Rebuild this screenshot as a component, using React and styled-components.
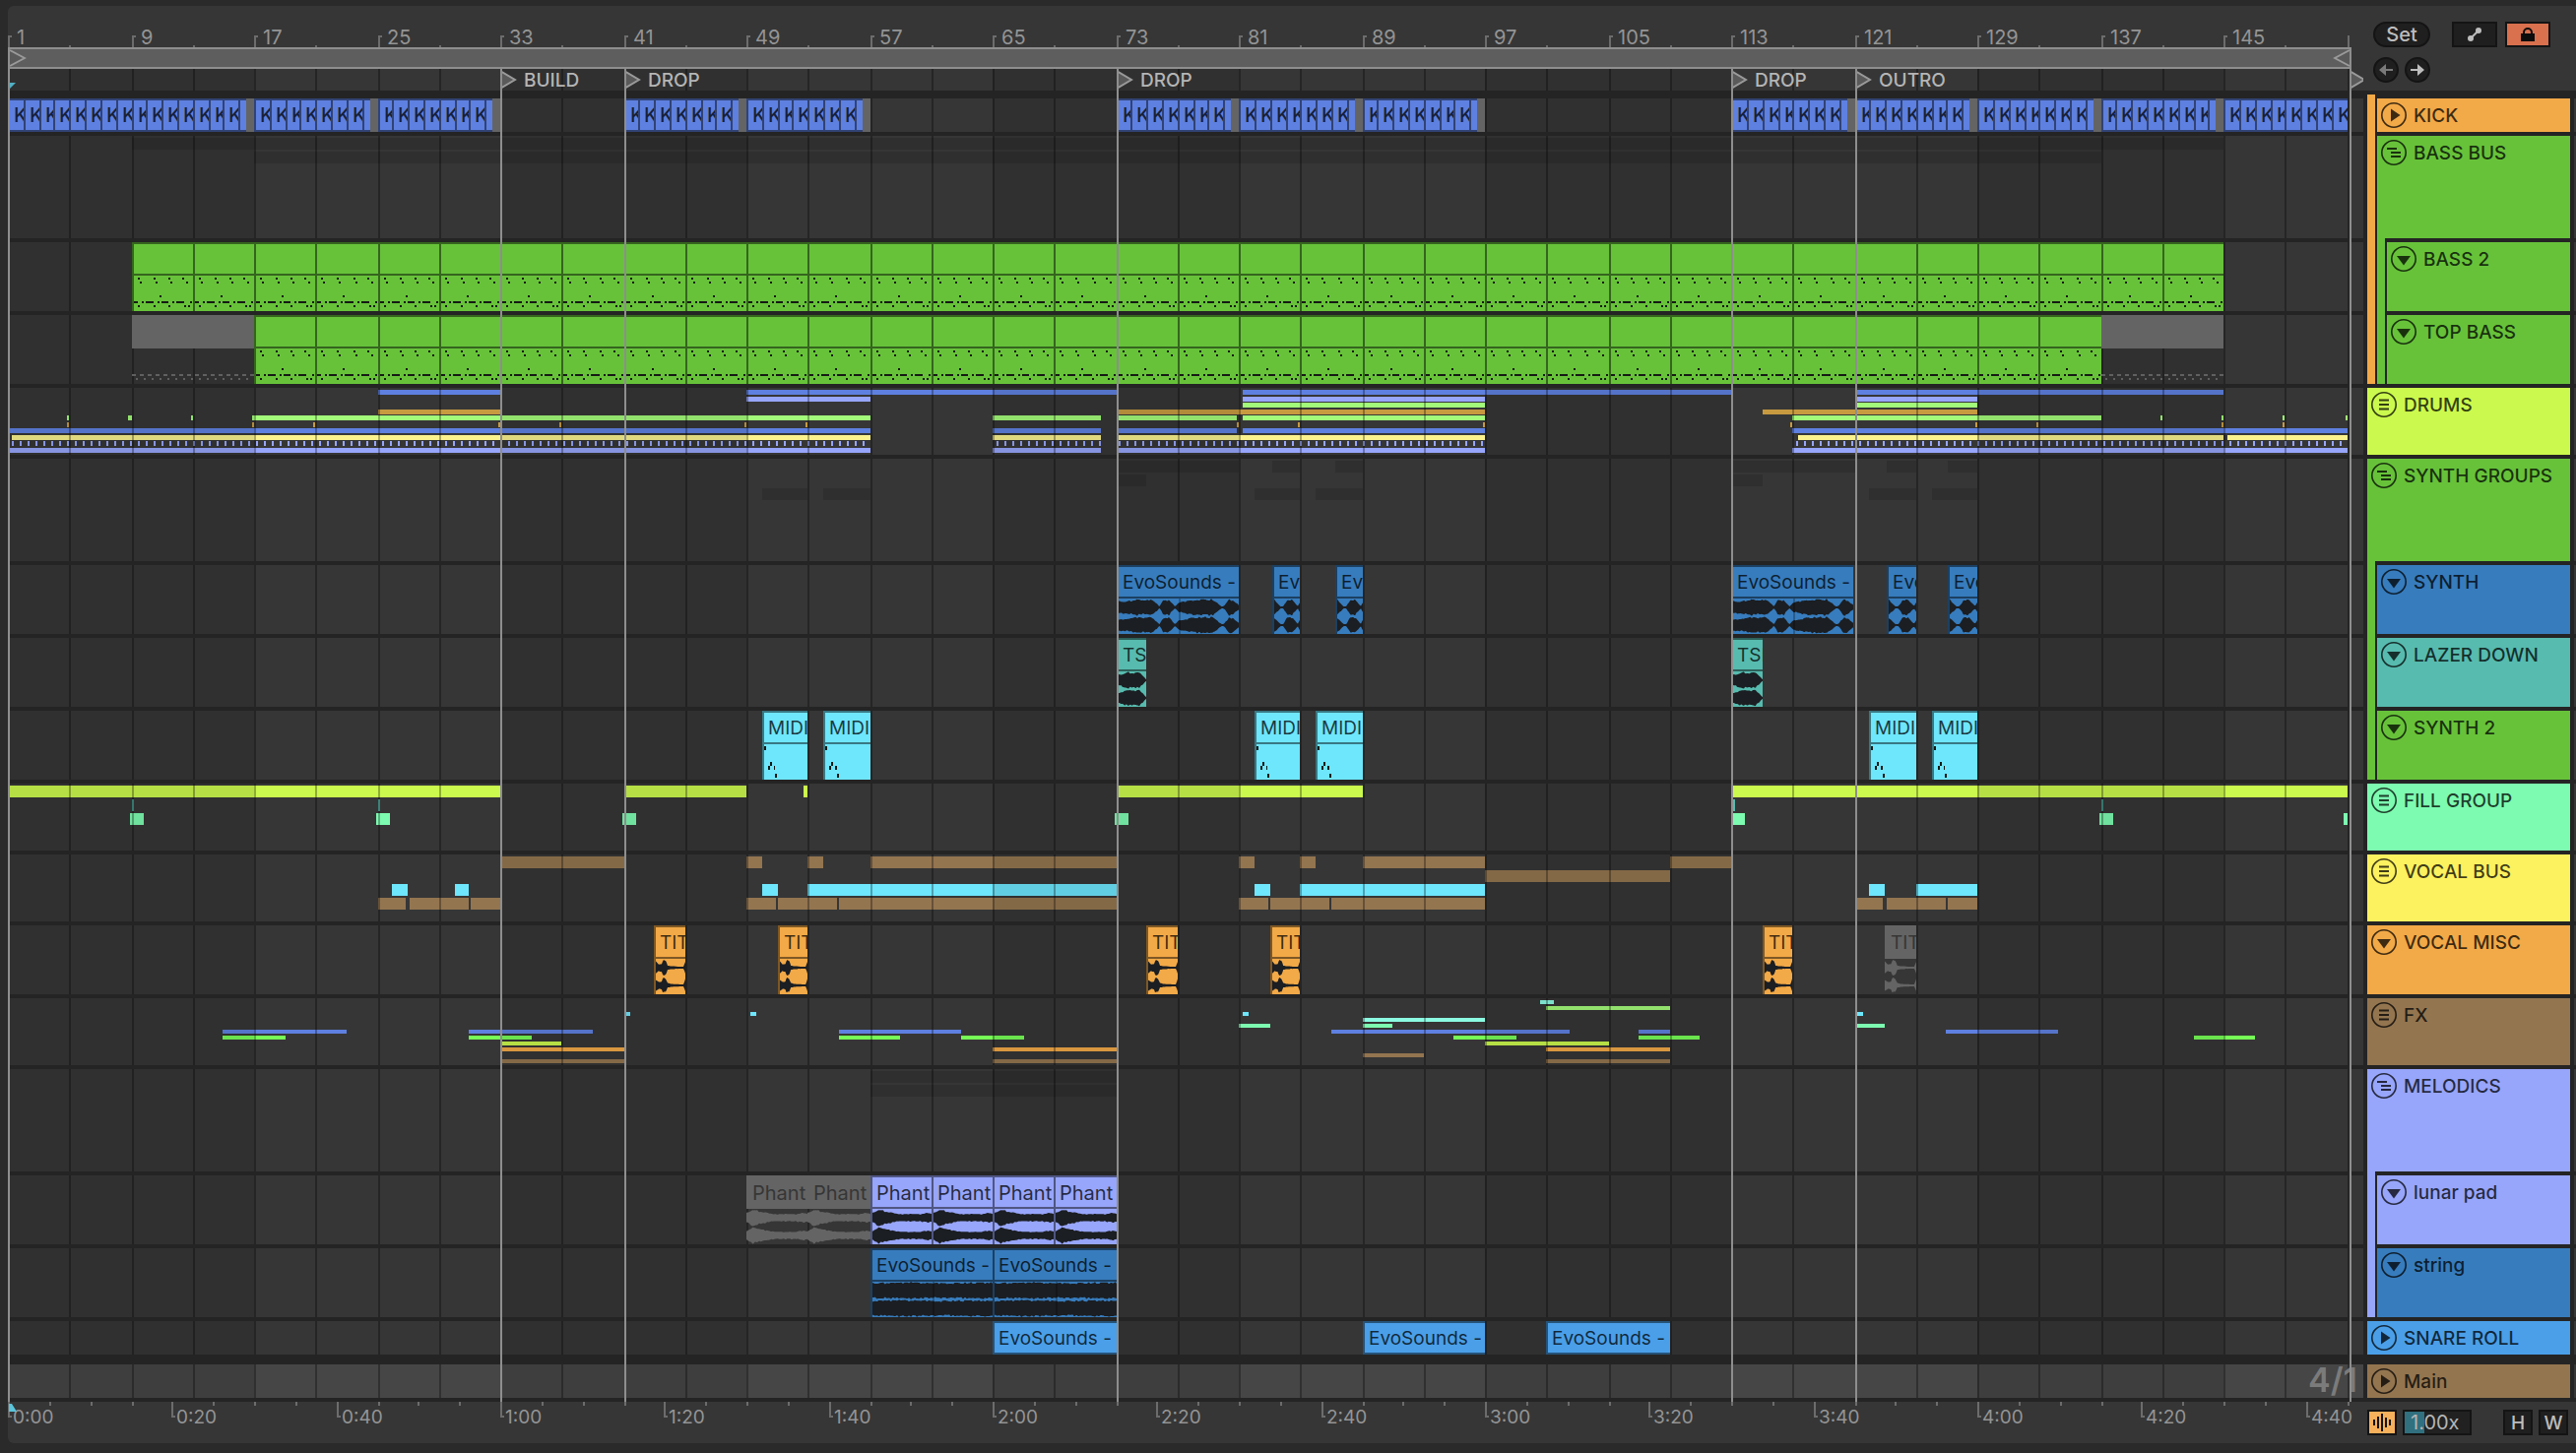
import React from "react";
import styled, { createGlobalStyle, css } from "styled-components";

const BAR_COUNT = 153.07;

const c = {
  orange: "#f2a947",
  green: "#67c23a",
  lime: "#cbf94d",
  blue: "#377cbd",
  teal: "#57bbaf",
  mint: "#7dfbb0",
  yellow: "#fcf15f",
  brown: "#937550",
  violet: "#97a5fa",
  sky: "#4a9fe8",
  cyan: "#6ee6fc",
  kick: "#5e80e0",
  leaf: "#a3fb7a",
  amber: "#c79a40",
  straw: "#fbf28d",
  neon: "#76fd56",
  aqua: "#8bfbe2",
  muted: "#646464",
  gap: "#242424",
  panel: "#363636",
  line: "#8e8e8e",
};

const GlobalStyle = createGlobalStyle`
  * {
    box-sizing: border-box;
  }
  body {
    margin: 0;
    background: #2a2a2a;
    font-family: Inter, "Liberation Sans", sans-serif;
    font-size: 19px;
    color: #b5b5b5;
  }
  button, input {
    font: inherit;
    color: inherit;
    margin: 0;
    padding: 0;
  }
`;

const Page = styled.main`
  padding: 6px 0 10px 8px;
`;

const Panel = styled.div`
  display: grid;
  grid-template-columns: minmax(0, 1fr) 216px;
  background: ${c.panel};
  border-radius: 6px 0 0 6px;
  overflow: hidden;
`;

const Timeline = styled.section`
  min-width: 0;
`;

/* everything on the timeline is placed by its bar number */
const atBar = css`
  position: absolute;
  left: calc(var(--from) * 100% / ${BAR_COUNT});
  left: round(calc(var(--from) * 100% / ${BAR_COUNT}), 2px);
`;

const barSpan = css`
  ${atBar}
  right: calc(100% - var(--to) * 100% / ${BAR_COUNT});
  right: calc(100% - round(calc(var(--to) * 100% / ${BAR_COUNT}), 2px));
`;

const span = (from, to) => ({ "--from": from - 1, "--to": (to || from) - 1 });

const Ruler = styled.div`
  position: relative;
  height: 42px;
  font-size: 20px;
  color: #949494;
`;

const BarMark = styled.div`
  ${atBar}
  bottom: 0;
  display: flex;
  align-items: flex-end;
  gap: 5px;
  line-height: 20px;
`;

const BarTick = styled.i`
  width: 4px;
  height: 12px;
  border-left: 2px solid #6c6c6c;
  border-top: 2px solid #6c6c6c;
`;

const SmallTick = styled.i`
  ${atBar}
  bottom: 0;
  width: 2px;
  height: ${(props) => props.$tall || 2}px;
  background: #6c6c6c;
`;

const LoopBar = styled.div`
  display: flex;
  justify-content: space-between;
  height: 22px;
  margin-right: 12px;
  border: 2px solid ${c.line};
  background: #5e5e5e;
`;

const Arrangement = styled.div`
  position: relative;
  overflow: hidden;
`;

const MarkerLane = styled.div`
  position: relative;
  height: 22px;
`;

const Marker = styled.div`
  ${atBar}
  z-index: 2;
  top: 0;
  display: flex;
  align-items: center;
  gap: 7px;
  height: 22px;
  font-weight: 500;
`;

const Gap = styled.div`
  position: relative;
  z-index: 2;
  height: ${(props) => props.$size || 4}px;
  background: ${c.gap};
`;

const Lane = styled.div`
  position: relative;
  height: ${(props) => props.$height}px;
  background: ${(props) => (props.$main ? "#464646" : c.panel)};
`;

const GridZone = styled.div`
  ${barSpan}
  z-index: 1;
  top: 0;
  bottom: 0;
  background: rgba(0, 0, 0, 0.1);
`;

const GridLine = styled.div`
  ${atBar}
  z-index: 1;
  top: 0;
  bottom: 0;
  width: 2px;
  background: rgba(0, 0, 0, 0.3);
`;

const MarkerLine = styled.div`
  ${atBar}
  z-index: 3;
  top: 0;
  bottom: 0;
  width: 2px;
  background: ${c.line};
`;

const MiniRows = styled.div`
  display: flex;
  flex-direction: column;
  justify-content: ${(props) => (props.$spread ? "space-between" : "flex-start")};
  gap: ${(props) => (props.$spread ? 0 : 2)}px;
  height: 100%;
  padding: 2px 0;
`;

const MiniRow = styled.div`
  position: relative;
  flex: none;
  height: ${(props) => props.$height}px;
`;

const MiniClip = styled.div`
  ${barSpan}
  top: 0;
  bottom: 0;
  min-width: 2px;
  background: ${(props) =>
    props.$ticks
      ? `repeating-linear-gradient(90deg, ${props.$color} 0 2px, transparent 2px 8px)`
      : props.$color};
`;

const ClipBox = styled.div`
  ${barSpan}
  z-index: 2;
  top: 0;
  bottom: 0;
  display: flex;
  flex-direction: column;
  overflow: hidden;
  background: ${(props) => props.$color};
  border: 0 solid rgba(0, 0, 0, 0.48);
  border-width: ${(props) => (props.$short ? "2px 0 2px 2px" : "2px 0 0 2px")};
  color: rgba(0, 0, 0, 0.75);
  ${(props) =>
    props.$muted &&
    css`
      background: none;
      border-color: transparent;
      border-width: 0;
      color: #363636;
    `}
`;

const ClipTitle = styled.div`
  flex: none;
  height: 30px;
  padding-left: 4px;
  font-size: ${(props) => (props.$large ? 20 : 19)}px;
  line-height: 32px;
  white-space: nowrap;
  ${(props) =>
    props.$muted &&
    css`
      height: 34px;
      padding-left: 6px;
      line-height: 36px;
      background: ${c.muted};
    `}
`;

const ClipBody = styled.div`
  position: relative;
  flex: 1;
  min-height: 0;
  border-top: ${(props) => (props.$muted ? 0 : 2)}px solid rgba(0, 0, 0, 0.48);
  ${(props) =>
    props.$split &&
    css`
      &::after {
        content: "";
        position: absolute;
        left: 50%;
        top: 0;
        bottom: 0;
        width: 2px;
        background: rgba(0, 0, 0, 0.25);
      }
    `}
  svg {
    display: block;
    width: 100%;
    height: 36px;
  }
`;

const KickClip = styled(ClipBox)`
  padding-left: 4px;
  font-size: 20px;
  font-weight: 500;
  line-height: 31px;
`;

const KickEnd = styled(ClipBox)`
  border: 0;
`;

const MutedDashes = styled.div`
  height: 2px;
  margin-top: ${(props) => props.$top}px;
  background: repeating-linear-gradient(
    90deg,
    transparent 0 ${(props) => props.$skip}px,
    #606060 ${(props) => props.$skip}px ${(props) => props.$skip + props.$dash}px,
    transparent ${(props) => props.$skip + props.$dash}px 8px
  );
`;

const Signature = styled.span`
  position: absolute;
  z-index: 2;
  right: 6px;
  top: 0;
  line-height: 32px;
  font-size: 34px;
  font-weight: 600;
  color: #7b7b7b;
`;

const TimeRuler = styled.div`
  position: relative;
  height: 42px;
  color: #949494;
  ${SmallTick} {
    top: 0;
  }
`;

const TimeMark = styled.div`
  ${atBar}
  top: 0;
  display: flex;
  gap: 1px;
  line-height: 31px;
`;

const TimeTick = styled.i`
  width: 4px;
  height: 16px;
  border-left: 2px solid #6c6c6c;
  border-bottom: 2px solid #6c6c6c;
`;

const Playhead = styled.svg`
  position: absolute;
  left: 1px;
  ${(props) => (props.$low ? "top: 2px;" : "bottom: 1px;")}
`;

const Side = styled.aside`
  display: flex;
  flex-direction: column;
`;

const Controls = styled.div`
  display: flex;
  flex-direction: column;
  gap: 10px;
  height: 86px;
  padding: 16px 0 0 10px;
`;

const ControlRow = styled.div`
  display: flex;
  gap: ${(props) => props.$gap}px;
`;

const Button = styled.button`
  display: flex;
  align-items: center;
  justify-content: center;
  width: ${(props) => props.$width}px;
  height: 26px;
  border: 2px solid #141414;
  border-radius: ${(props) => (props.$round ? 13 : 0)}px;
  background: ${(props) => props.$color || "#1f1f1f"};
  color: ${(props) => (props.$dim ? "#7a7a7a" : "#bdbdbd")};
  font-weight: 500;
`;

const SetButton = styled(Button)`
  margin-right: 14px;
  font-size: 20px;
`;

const Headers = styled.div`
  display: grid;
  grid-template-columns: minmax(0, 1fr) 2px;
  gap: 4px;
  padding-left: 4px;
  background: ${c.gap};
`;

const HeaderList = styled.div`
  padding-top: 4px;
`;

const HeaderBox = styled.div`
  border: 0 solid ${c.gap};
  border-top-width: 4px;
  border-left-width: ${(props) => (props.$nested ? 2 : 0)}px;
  margin-top: ${(props) => (props.$apart ? 6 : 0)}px;
`;

const Header = styled.div`
  display: flex;
  gap: 7px;
  height: ${(props) => props.$height}px;
  padding: 4px;
  background: ${(props) => props.$color};
  color: rgba(0, 0, 0, 0.75);
  font-weight: 500;
  line-height: 28px;
  white-space: nowrap;
`;

const GroupBody = styled.div`
  padding-left: 8px;
  background: ${(props) => props.$color};
`;

const FoldButton = styled.button`
  flex: none;
  width: 26px;
  height: 26px;
  border: 0;
  background: none;
  svg {
    display: block;
  }
`;

const Edge = styled.div`
  padding-top: 8px;
`;

const EdgeCell = styled.div`
  height: ${(props) => props.$height}px;
  margin-bottom: ${(props) => props.$after || 4}px;
  background: ${c.panel};
`;

const Footer = styled.div`
  display: flex;
  gap: 6px;
  height: 42px;
  padding: 8px 8px 0 4px;
`;

const SpeedInput = styled.input`
  width: 70px;
  height: 26px;
  padding-left: 6px;
  border: 2px solid #141414;
  background: linear-gradient(90deg, #31707f 20px, #212121 20px);
  font-size: 20px;
`;

const FooterRight = styled.div`
  display: flex;
  gap: 6px;
  margin-left: auto;
`;

/* ---- waveforms ---- */

const shapes = {
  synth: [
    [0, 0.8], [0.06, 0.72], [0.15, 1], [0.22, 0.85], [0.26, 1], [0.3, 0.7],
    [0.34, 0.1], [0.37, 0.85], [0.42, 0.95], [0.47, 0.1], [0.5, 0.6],
    [0.63, 0.95], [0.78, 1], [0.86, 0.1], [0.88, 0.2], [0.92, 1], [0.95, 0.9], [1, 0.3],
  ],
  stab: [[0, 1], [0.25, 0.1], [0.36, 0.15], [0.5, 0.95], [0.7, 0.95], [0.92, 0.15], [1, 0.6]],
  lazer: [[0, 0.7], [0.1, 0.75], [0.35, 1], [0.55, 0.9], [0.75, 1], [1, 0.1]],
  vocal: [
    [0, 0.8], [0.1, 0.45], [0.2, 0.5], [0.25, 1], [0.34, 0.8], [0.4, 0.3],
    [0.5, 0.2], [0.7, 0.15], [0.94, 0.12], [1, 0.8],
  ],
  pad: [[0, 0.6], [0.1, 1], [0.25, 0.75], [0.45, 0.45], [0.8, 0.45], [0.93, 0.6], [1, 0.5]],
  strings: [[0, 0.95], [0.3, 1], [0.55, 0.92], [1, 1]],
};

const noise = (i) => {
  const n = Math.sin(i * 12.9898 + 4.1) * 43758.5453;
  return n - Math.floor(n);
};

const envelope = (points, t) => {
  const next = points.findIndex((p) => p[0] >= t);
  if (next <= 0) return points[0][1];
  const [t0, a0] = points[next - 1];
  const [t1, a1] = points[next];
  return a0 + ((a1 - a0) * (t - t0)) / (t1 - t0);
};

const wavePath = (shape, width) => {
  const channel = (mid, seed) => {
    const top = [];
    const bottom = [];
    for (let x = 0; x <= width; x++) {
      const amp = envelope(shapes[shape], x / width) * 8.8;
      const n = Math.floor(x / 2) + seed;
      top.push(`${x} ${(mid - amp * (1 - noise(n) * 0.2)).toFixed(1)}`);
      bottom.unshift(`${x} ${(mid + amp * (1 - noise(n + 50) * 0.2)).toFixed(1)}`);
    }
    return `M${top.join("L")}L${bottom.join("L")}Z`;
  };
  return channel(9, 1) + channel(27, 7);
};

const Wave = ({ shape, bars, muted }) => {
  const width = Math.round(bars * 15);
  return (
    <svg viewBox={`0 0 ${width} 36`} preserveAspectRatio="none">
      <path d={wavePath(shape, width)} fill={muted ? c.muted : "#1b1e22"} />
    </svg>
  );
};

/* ---- midi notes: x, y, width, height ---- */

const bassNotes = [
  [4, 2, 2, 2], [20, 2, 2, 2], [36, 2, 2, 2], [50, 2, 2, 2],
  [6, 6, 2, 2], [22, 6, 2, 2], [38, 6, 2, 2], [54, 6, 2, 2],
  [26, 20, 2, 2],
  [0, 26, 4, 2], [8, 26, 2, 2], [12, 26, 8, 2], [24, 26, 2, 2],
  [28, 26, 8, 2], [40, 26, 2, 2], [44, 26, 8, 2], [58, 26, 2, 2],
  [4, 30, 2, 2], [20, 30, 2, 2], [36, 30, 2, 2], [52, 30, 2, 2], [56, 30, 2, 2],
];

const leadNotes = [[0, 2, 2, 4], [6, 18, 2, 4], [4, 22, 2, 4], [10, 22, 2, 4], [12, 30, 2, 4]];

const Notes = ({ notes, width }) => (
  <svg viewBox={`0 0 ${width} 36`} preserveAspectRatio="none" shapeRendering="crispEdges">
    <path
      fill="#161a14"
      d={notes.map(([x, y, w, h]) => `M${x} ${y}h${w}v${h}h${-w}z`).join("")}
    />
  </svg>
);

/* ---- tracks ---- */

const every = (from, to, step) => {
  const list = [];
  for (let bar = from; bar < to; bar += step) list.push(bar);
  return list;
};

const row = (color, ...spans) => ({ color, spans });
const ghost = (...spans) => row("rgba(0, 0, 0, 0.13)", ...spans);
const hit = (bar) => [bar - 0.13, bar];

const evo = (from, to) => ({ from, to, name: "EvoSounds -", shape: "synth", split: true });
const stab = (from, to) => ({ from, to, name: "Evo", shape: "stab" });
const midi = (from) => ({ from, to: from + 3, name: "MIDI", notes: leadNotes, width: 46 });
const tit = (from, muted) => ({ from, to: from + 2, name: "TIT", shape: "vocal", muted });
const phant = (from, muted) => ({
  from,
  to: from + 4,
  name: "Phant",
  shape: "pad",
  large: true,
  muted,
});
const bass = (from) => ({ from, to: from + 4, notes: bassNotes, width: 61 });

const lanes = [
  { id: "kick", height: 34 },
  { id: "bassbus", height: 104, rowHeight: 12, rows: [ghost([9, 145]), ghost([17, 137])] },
  { id: "bass2", height: 70, color: c.green, clips: every(9, 145, 4).map(bass) },
  {
    id: "topbass",
    height: 70,
    color: c.green,
    clips: [
      { from: 9, to: 17, muted: true, dashes: true },
      ...every(17, 137, 4).map(bass),
      { from: 137, to: 145, muted: true, dashes: true },
    ],
  },
  {
    id: "drums",
    height: 68,
    rowHeight: 5,
    spread: true,
    rows: [
      row(c.kick, [25, 33], [49, 73], [81.2, 113], [121, 145]),
      row(c.violet, [49, 57], [81.2, 97], [121, 129]),
      row(c.leaf, [81.2, 97], [121, 129]),
      row(c.amber, [25, 33], [73, 97], [115, 129]),
      row(
        c.leaf,
        ...[5, 9, 13].map(hit),
        [16.9, 57],
        [65, 72],
        [73, 80.9],
        [81.2, 97],
        [116.9, 137],
        ...[141, 145, 149, 153].map(hit)
      ),
      row(c.amber, ...[5, 17, 21, 33, 37, 49, 53, 81, 85, 97, 117, 129, 133, 145, 149].map(hit)),
      row(c.kick, [1, 57], [65, 72], [73, 80.9], [81.2, 97], [117, 153]),
      row(c.straw, [1.25, 57], [65, 72], [73, 97], [117.3, 145], [145.3, 153]),
      { color: c.violet, ticks: true, spans: [[1.25, 57], [65.2, 72], [73.2, 97], [117.2, 153]] },
      row(c.violet, [1, 57], [65, 72], [73, 97], [117, 153]),
    ],
  },
  {
    id: "synthgroups",
    height: 104,
    rowHeight: 12,
    rows: [
      ghost([73, 81], [83.2, 85], [87.2, 89], [113, 121], [123.1, 125], [127.1, 129]),
      ghost([73, 75], [113, 115]),
      ghost([50, 53], [54, 57], [82, 85], [86, 89], [122, 125], [126, 129]),
    ],
  },
  {
    id: "synth",
    height: 70,
    color: c.blue,
    clips: [
      evo(73, 81),
      stab(83.2, 85),
      stab(87.2, 89),
      evo(113, 120.9),
      stab(123.1, 125),
      stab(127.1, 129),
    ],
  },
  {
    id: "lazer",
    height: 70,
    color: c.teal,
    clips: [73, 113].map((from) => ({ from, to: from + 2, name: "TSP", shape: "lazer" })),
  },
  { id: "synth2", height: 70, color: c.cyan, clips: [50, 54, 82, 86, 122, 126].map(midi) },
  {
    id: "fill",
    height: 68,
    rowHeight: 12,
    rows: [
      row(c.lime, [1, 33], [41, 49], [52.75, 53], [73, 89], [113, 153]),
      row(c.teal, [9, 9.1], [25, 25.1], [113.1, 113.2], [137, 137.1]),
      row(
        c.mint,
        [8.9, 9.8],
        [24.9, 25.8],
        [40.9, 41.8],
        [72.9, 73.8],
        [113, 113.9],
        [136.9, 137.8],
        [152.85, 153]
      ),
    ],
  },
  {
    id: "vocalbus",
    height: 68,
    rowHeight: 12,
    rows: [
      row(c.brown, [33, 41], [49, 50], [53, 54], [57, 73], [81, 82], [85, 86], [89, 97], [109, 113]),
      row(c.brown, [97, 109]),
      row(c.cyan, [26, 27], [30, 31], [50, 51], [53, 73], [82, 83], [85, 97], [122, 123], [125, 129]),
      row(
        c.brown,
        [25, 26.9],
        [27.05, 30.9],
        [31.05, 33],
        [49, 50.9],
        [51.05, 54.9],
        [55.05, 73],
        [81, 82.9],
        [83.05, 86.9],
        [87.05, 97],
        [121, 122.9],
        [123.05, 126.9],
        [127.05, 129]
      ),
    ],
  },
  {
    id: "vocalmisc",
    height: 70,
    color: c.orange,
    clips: [tit(43), tit(51), tit(75), tit(83), tit(115), tit(123, true)],
  },
  {
    id: "fx",
    height: 68,
    rowHeight: 4,
    rows: [
      row(c.aqua, [100.6, 101.5]),
      row(c.leaf, [101, 109]),
      row(c.cyan, [41.1, 41.5], [49.3, 49.6], [81.3, 81.6], [121.1, 121.5]),
      row(c.aqua, [89, 97]),
      row(c.mint, [81, 83], [89, 91], [121, 123]),
      row(c.kick, [15, 23], [31, 39], [55, 63], [87, 102.5], [107, 109], [127, 134.2]),
      row(c.neon, [15, 19], [31, 35], [55, 59], [63, 67], [95, 99], [107, 111], [143, 147]),
      row(c.lime, [33, 37], [97, 105]),
      row(c.orange, [33, 41], [65, 73], [101, 109]),
      row(c.brown, [89, 93]),
      row(c.brown, [33, 41], [65, 73], [101, 109]),
    ],
  },
  { id: "melodics", height: 104, rowHeight: 12, rows: [ghost([57, 73]), ghost([57, 73])] },
  {
    id: "lunar",
    height: 70,
    color: c.violet,
    clips: [phant(49, true), phant(53, true), phant(57), phant(61), phant(65), phant(69)],
  },
  {
    id: "string",
    height: 70,
    color: c.blue,
    clips: [57, 65].map((from) => ({ ...evo(from, from + 8), shape: "strings" })),
  },
  {
    id: "snare",
    height: 34,
    color: c.sky,
    after: 10,
    clips: [65, 89, 101].map((from) => ({ from, to: from + 8, name: "EvoSounds -", short: true })),
  },
  { id: "main", height: 34, main: true },
];

const headers = [
  {
    color: c.orange,
    children: [
      { name: "KICK", color: c.orange, icon: "play", height: 34 },
      {
        name: "BASS BUS",
        color: c.green,
        icon: "open",
        height: 104,
        children: [
          { name: "BASS 2", color: c.green, icon: "down", height: 70 },
          { name: "TOP BASS", color: c.green, icon: "down", height: 70 },
        ],
      },
    ],
  },
  { name: "DRUMS", color: c.lime, icon: "group", height: 68 },
  {
    name: "SYNTH GROUPS",
    color: c.green,
    icon: "open",
    height: 104,
    children: [
      { name: "SYNTH", color: c.blue, icon: "down", height: 70 },
      { name: "LAZER DOWN", color: c.teal, icon: "down", height: 70 },
      { name: "SYNTH 2", color: c.green, icon: "down", height: 70 },
    ],
  },
  { name: "FILL GROUP", color: c.mint, icon: "group", height: 68 },
  { name: "VOCAL BUS", color: c.yellow, icon: "group", height: 68 },
  { name: "VOCAL MISC", color: c.orange, icon: "down", height: 70 },
  { name: "FX", color: c.brown, icon: "group", height: 68 },
  {
    name: "MELODICS",
    color: c.violet,
    icon: "open",
    height: 104,
    children: [
      { name: "lunar pad", color: c.violet, icon: "down", height: 70 },
      { name: "string", color: c.blue, icon: "down", height: 70 },
    ],
  },
  { name: "SNARE ROLL", color: c.sky, icon: "play", height: 34 },
  { name: "Main", color: c.brown, icon: "play", height: 34, apart: true },
];

const markers = [
  { bar: 33, name: "BUILD" },
  { bar: 41, name: "DROP" },
  { bar: 73, name: "DROP" },
  { bar: 113, name: "DROP" },
  { bar: 121, name: "OUTRO" },
  { bar: 153.2, name: "" },
];

const foldPaths = {
  play: <path d="M10 6.5v13l9.5-6.5z" fill="currentColor" />,
  down: <path d="M6 10h14l-7 9.5z" fill="currentColor" />,
  group: <path d="M8 8.5h10M8 13h10M8 17.5h10" stroke="currentColor" strokeWidth="2" />,
  open: <path d="M6 9h10M10 13h10M10 17h10" stroke="currentColor" strokeWidth="2" />,
};

const FoldIcon = ({ kind }) => (
  <svg width="26" height="26" viewBox="0 0 26 26" fill="none">
    <circle cx="13" cy="13" r="12.2" stroke="currentColor" strokeWidth="1.6" />
    {foldPaths[kind]}
  </svg>
);

const Flag = ({ left, height = 20 }) => (
  <svg width="17" height={height} viewBox="0 0 17 20" preserveAspectRatio="none">
    <path
      d={left ? "M17 1L2 10L17 19" : "M0 1L15 10L0 19"}
      fill="#5a5a5a"
      stroke="#9a9a9a"
      strokeWidth="2"
    />
  </svg>
);

const Clip = ({ clip, color }) => {
  const { from, to, name, muted, short, split, large } = clip;
  return (
    <ClipBox $color={color} $muted={muted} $short={short} style={span(from, to)}>
      <ClipTitle $muted={muted} $large={large}>
        {name}
      </ClipTitle>
      {!short && (
        <ClipBody $muted={muted} $split={split}>
          {clip.shape && <Wave shape={clip.shape} bars={to - from} muted={muted} />}
          {clip.notes && <Notes notes={clip.notes} width={clip.width} />}
          {clip.dashes && (
            <>
              <MutedDashes $top={26} $skip={0} $dash={4} />
              <MutedDashes $top={2} $skip={4} $dash={2} />
            </>
          )}
        </ClipBody>
      )}
    </ClipBox>
  );
};

const KickClips = () => {
  const phrases = [[1, 17], [17, 25], [25, 33], [41, 49], [49, 57], [73, 81], [81, 89], [89, 97]];
  phrases.push([113, 121], [121, 129], [129, 137], [137, 145]);
  return (
    <>
      {phrases.map(([from, to]) => (
        <React.Fragment key={from}>
          {every(from, to - 1, 1).map((bar) => (
            <KickClip key={bar} $color={c.kick} $short style={span(bar, bar + 1)}>
              K
            </KickClip>
          ))}
          <KickClip $color={c.kick} $short style={span(to - 1, to - 0.5)} />
          <KickEnd $color={c.muted} style={span(to - 0.5, to)} />
        </React.Fragment>
      ))}
      {every(145, 153, 1).map((bar) => (
        <KickClip key={bar} $color={c.kick} $short style={span(bar, bar + 1)}>
          K
        </KickClip>
      ))}
    </>
  );
};

const TrackLane = ({ lane }) => (
  <>
    <Lane $height={lane.height} $main={lane.main}>
      {lane.rows && (
        <MiniRows $spread={lane.spread}>
          {lane.rows.map((r, i) => (
            <MiniRow key={i} $height={lane.rowHeight}>
              {r.spans.map(([from, to]) => (
                <MiniClip key={from} $color={r.color} $ticks={r.ticks} style={span(from, to)} />
              ))}
            </MiniRow>
          ))}
        </MiniRows>
      )}
      {lane.id === "kick" && <KickClips />}
      {lane.clips &&
        lane.clips.map((clip) => <Clip key={clip.from} clip={clip} color={lane.color} />)}
      {lane.main && <Signature>4/1</Signature>}
    </Lane>
    <Gap $size={lane.after} />
  </>
);

const TrackHeader = ({ track, nested }) => {
  const body = track.children && (
    <GroupBody $color={track.color}>
      {track.children.map((child) => (
        <TrackHeader key={child.name} track={child} nested />
      ))}
    </GroupBody>
  );
  if (!track.name) return body;
  return (
    <HeaderBox $nested={nested} $apart={track.apart}>
      <Header $height={track.height} $color={track.color}>
        <FoldButton aria-label={`Fold ${track.name}`}>
          <FoldIcon kind={track.icon} />
        </FoldButton>
        {track.name}
      </Header>
      {body}
    </HeaderBox>
  );
};

const timeLabel = (sec) => `${Math.floor(sec / 60)}:${String(sec % 60).padStart(2, "0")}`;
const secToBar = (sec) => sec / 1.875 + 1;

const App = () => (
  <Page>
    <GlobalStyle />
    <Panel>
      <Timeline>
        <Ruler>
          {every(1, 153, 8).map((bar) => (
            <BarMark key={bar} style={span(bar)}>
              <BarTick />
              {bar}
            </BarMark>
          ))}
          {every(5, 153, 8).map((bar) => (
            <SmallTick key={bar} style={span(bar)} />
          ))}
          <SmallTick $tall={12} style={span(153)} />
        </Ruler>
        <LoopBar>
          <Flag height={18} />
          <Flag height={18} left />
        </LoopBar>
        <Arrangement>
          <MarkerLane>
            {markers.map((m) => (
              <Marker key={m.bar} style={span(m.bar)}>
                <Flag />
                {m.name}
              </Marker>
            ))}
            <Playhead width="7" height="7" viewBox="0 0 7 7">
              <path d="M0 0h7L0 7z" fill="#5cc4da" />
            </Playhead>
          </MarkerLane>
          <Gap $size={8} />
          {lanes.map((lane) => (
            <TrackLane key={lane.id} lane={lane} />
          ))}
          {every(1, 153, 32).map((bar) => (
            <GridZone key={bar} style={span(bar, bar + 16)} />
          ))}
          {every(5, 154, 4).map((bar) => (
            <GridLine key={bar} style={span(bar)} />
          ))}
          <MarkerLine style={span(1)} />
          {markers.map((m) => (
            <MarkerLine key={m.bar} style={span(m.bar)} />
          ))}
        </Arrangement>
        <TimeRuler>
          {every(0, 290, 5).map((sec) =>
            sec % 20 === 0 ? (
              <TimeMark key={sec} style={span(secToBar(sec))}>
                <TimeTick />
                {timeLabel(sec)}
              </TimeMark>
            ) : (
              <SmallTick key={sec} $tall={4} style={span(secToBar(sec))} />
            )
          )}
          <Playhead $low width="8" height="8" viewBox="0 0 8 8">
            <path d="M0 0h3L8 8H0z" fill="#5cc4da" />
          </Playhead>
        </TimeRuler>
      </Timeline>
      <Side>
        <Controls>
          <ControlRow $gap={8}>
            <SetButton $width={58} $round>
              Set
            </SetButton>
            <Button $width={46} aria-label="Automation mode">
              <svg width="16" height="16" viewBox="0 0 16 16">
                <path d="M4 12L12 4" stroke="currentColor" strokeWidth="2" />
                <circle cx="4" cy="12" r="3" fill="currentColor" />
                <circle cx="12" cy="4" r="3" fill="currentColor" />
              </svg>
            </Button>
            <Button $width={46} $color="#d9704e" aria-label="Lock envelopes">
              <svg width="16" height="16" viewBox="0 0 16 16">
                <path d="M4 8V6a4 4 0 0 1 8 0v2" fill="none" stroke="#0c0c0c" strokeWidth="2" />
                <path d="M1 7h14v8H1z" fill="#0c0c0c" />
              </svg>
            </Button>
          </ControlRow>
          <ControlRow $gap={6}>
            <Button $width={26} $round $dim aria-label="Previous locator">
              <svg width="16" height="14" viewBox="0 0 16 14" fill="currentColor">
                <path d="M1 7l7-6v5h7v2H8v5z" />
              </svg>
            </Button>
            <Button $width={26} $round aria-label="Next locator">
              <svg width="16" height="14" viewBox="0 0 16 14" fill="currentColor">
                <path d="M15 7L8 1v5H1v2h7v5z" />
              </svg>
            </Button>
          </ControlRow>
        </Controls>
        <Headers>
          <HeaderList>
            {headers.map((track) => (
              <TrackHeader key={track.name || "top"} track={track} />
            ))}
          </HeaderList>
          <Edge>
            {lanes.map((lane) => (
              <EdgeCell key={lane.id} $height={lane.height} $after={lane.after} />
            ))}
          </Edge>
        </Headers>
        <Footer>
          <Button $width={30} $color="#f7b05b" aria-label="Waveform zoom">
            <svg width="18" height="18" viewBox="0 0 18 18">
              <path d="M1 6v6M5 3v12M9 0v18M13 4v10M17 6v6" stroke="#141414" strokeWidth="2" />
            </svg>
          </Button>
          <SpeedInput aria-label="Track height zoom" defaultValue="1.00x" />
          <FooterRight>
            <Button $width={30}>H</Button>
            <Button $width={30}>W</Button>
          </FooterRight>
        </Footer>
      </Side>
    </Panel>
  </Page>
);

export default App;
